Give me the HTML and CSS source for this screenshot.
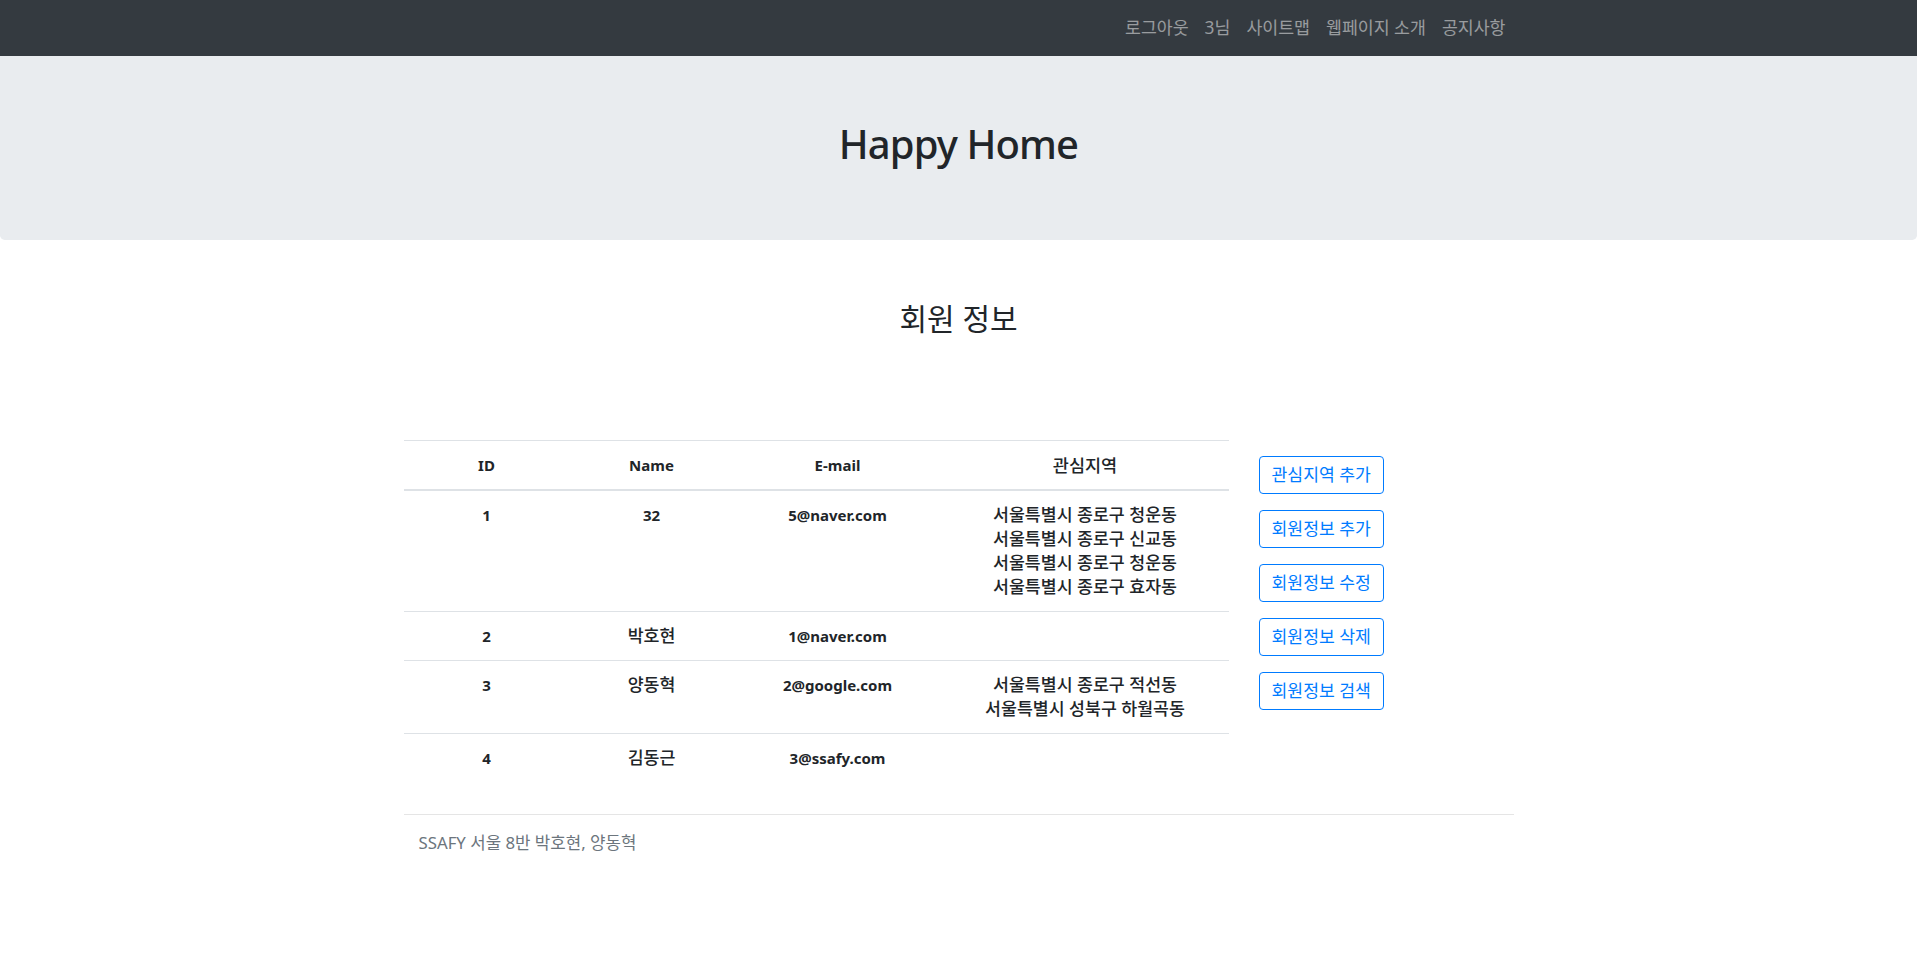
FILE: index.html
```
<!DOCTYPE html>
<html lang="ko">
<head>
<meta charset="utf-8">
<title>Happy Home</title>
<link rel="stylesheet" href="styles.css">
</head>
<body>
<nav class="navbar">
  <div class="nav-container">
    <ul class="nav-list">
      <li><a class="nav-link" href="#">로그아웃</a></li>
      <li><a class="nav-link" href="#">3님</a></li>
      <li><a class="nav-link" href="#">사이트맵</a></li>
      <li><a class="nav-link" href="#">웹페이지 소개</a></li>
      <li><a class="nav-link" href="#">공지사항</a></li>
    </ul>
  </div>
</nav>
<header class="jumbotron">
  <h1 class="brand">Happy Home</h1>
</header>
<main class="container">
  <h3 class="page-title">회원 정보</h3>
  <div class="row">
    <div class="col-table">
      <table class="member-table">
        <colgroup>
          <col class="c-id"><col class="c-name"><col class="c-mail"><col class="c-area">
        </colgroup>
        <thead>
          <tr><th>ID</th><th>Name</th><th>E-mail</th><th class="ko">관심지역</th></tr>
        </thead>
        <tbody>
          <tr>
            <td class="b">1</td><td class="b">32</td><td class="b">5@naver.com</td>
            <td class="area">서울특별시 종로구 청운동<br>서울특별시 종로구 신교동<br>서울특별시 종로구 청운동<br>서울특별시 종로구 효자동</td>
          </tr>
          <tr>
            <td class="b">2</td><td class="ko">박호현</td><td class="b">1@naver.com</td><td class="area"></td>
          </tr>
          <tr>
            <td class="b">3</td><td class="ko">양동혁</td><td class="b">2@google.com</td>
            <td class="area">서울특별시 종로구 적선동<br>서울특별시 성북구 하월곡동</td>
          </tr>
          <tr>
            <td class="b">4</td><td class="ko">김동근</td><td class="b">3@ssafy.com</td><td class="area"></td>
          </tr>
        </tbody>
      </table>
    </div>
    <div class="col-actions">
      <button class="btn-outline">관심지역 추가</button>
      <button class="btn-outline">회원정보 추가</button>
      <button class="btn-outline">회원정보 수정</button>
      <button class="btn-outline">회원정보 삭제</button>
      <button class="btn-outline">회원정보 검색</button>
    </div>
  </div>
  <hr class="divider">
  <footer class="footer">SSAFY 서울 8반 박호현, 양동혁</footer>
</main>
</body>
</html>
```
FILE: styles.css
```
* { box-sizing: border-box; }
html, body { margin: 0; padding: 0; }
body {
  font-family: "Noto Sans", "Noto Sans CJK KR", sans-serif;
  font-size: 16px;
  line-height: 1.5;
  color: #212529;
  background: #fff;
}
.navbar {
  background: #343a40;
  height: 56px;
}
.nav-container {
  width: 1140px;
  margin: 0 auto;
  padding: 0 15px;
  height: 100%;
  display: flex;
  justify-content: flex-end;
  align-items: center;
}
.nav-list {
  list-style: none;
  margin: 0;
  padding: 0;
  display: flex;
}
.nav-link {
  display: block;
  padding: 8px 8px;
  color: rgba(255,255,255,.5);
  text-decoration: none;
  font-size: 17.3px;
  line-height: 24px;
}
.jumbotron {
  background: #e9ecef;
  padding: 64px 32px;
  margin-bottom: 32px;
  border-radius: 0 0 4.8px 4.8px;
  text-align: center;
}
.brand {
  margin: 0 0 8px;
  font-size: 40px;
  font-weight: 500;
  line-height: 1.2;
  letter-spacing: -0.9px;
}
.container {
  width: 1140px;
  margin: 0 auto;
  padding: 30px 15px 0;
}
.page-title {
  margin: 0 0 104px;
  font-size: 30px;
  font-weight: 400;
  line-height: 34px;
  text-align: center;
}
.row {
  display: flex;
  gap: 30px;
}
.col-table { width: 825px; flex: none; }
.col-actions {
  flex: 1;
  display: flex;
  flex-direction: column;
  align-items: flex-start;
  gap: 16px;
  padding-top: 16px;
}
.member-table {
  width: 100%;
  border-collapse: collapse;
  margin-bottom: 16px;
  table-layout: fixed;
}
.c-id { width: 166px; }
.c-name { width: 164px; }
.c-mail { width: 208px; }
.c-area { width: 287px; }
.member-table th,
.member-table td {
  padding: 12px;
  text-align: center;
  vertical-align: top;
  border-top: 1px solid #dee2e6;
  line-height: 24px;
}
.member-table thead th {
  vertical-align: bottom;
  border-bottom: 2px solid #dee2e6;
  font-weight: 700;
  font-size: 15px;
}
.member-table thead th.ko { font-weight: 500; font-size: 17.5px; }
.member-table td.b { font-weight: 700; font-size: 15px; }
.member-table td.ko { font-weight: 500; font-size: 17.3px; }
.member-table td.area { font-weight: 500; font-size: 17.3px; }
.btn-outline {
  font-family: inherit;
  font-size: 17.2px;
  line-height: 24px;
  padding: 6px 12px;
  color: #007bff;
  background: transparent;
  border: 1px solid #007bff;
  border-radius: 4px;
  cursor: pointer;
}
.divider {
  margin: 16px 0;
  border: 0;
  border-top: 1px solid rgba(0,0,0,.1);
}
.footer {
  padding-left: 15px;
  color: #6c757d;
  font-size: 16.8px;
  line-height: 24px;
}
```
